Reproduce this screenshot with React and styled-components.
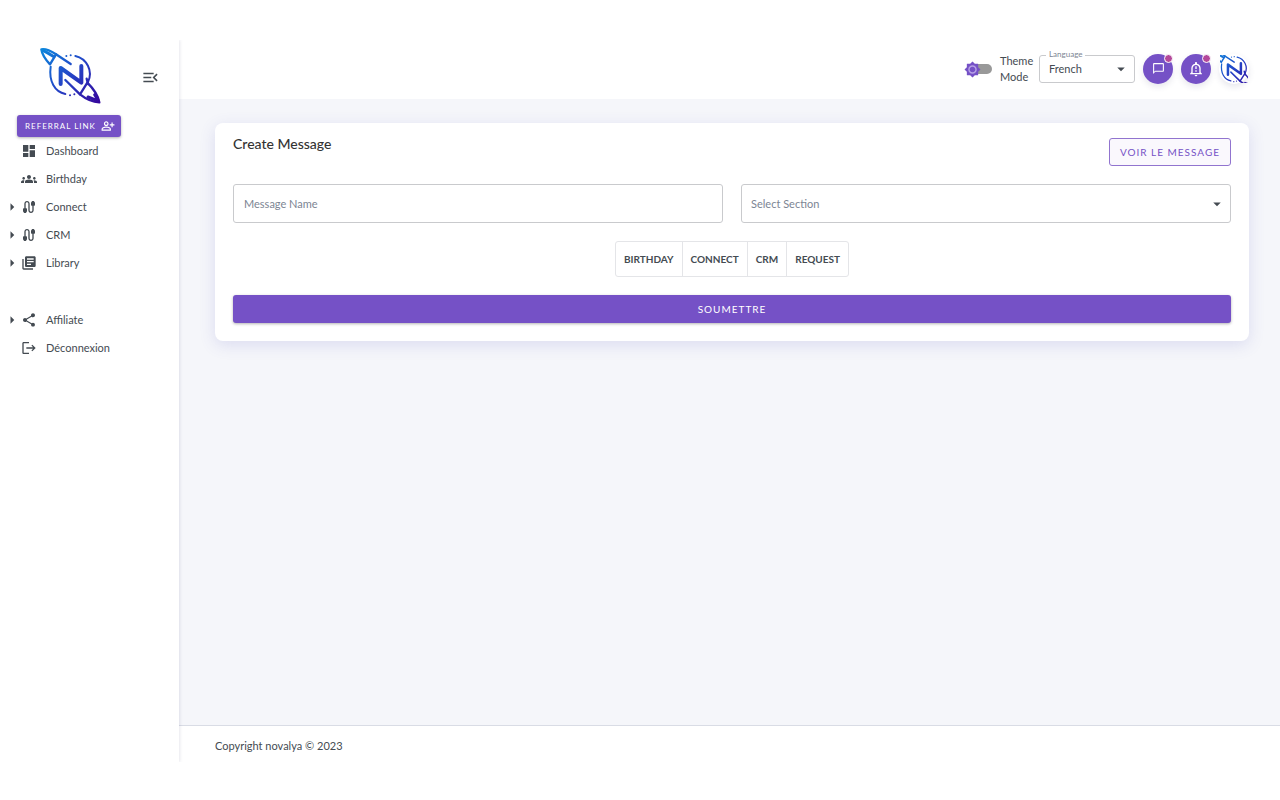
import React from "react";
import styled, { createGlobalStyle } from "styled-components";
import {
  MdArrowDropDown,
  MdArrowRight,
  MdBrightness7,
  MdCable,
  MdDashboard,
  MdGroups,
  MdLibraryBooks,
  MdLogout,
  MdMenuOpen,
  MdOutlineChatBubbleOutline,
  MdOutlineNotificationImportant,
  MdOutlinePersonAddAlt,
  MdShare,
} from "react-icons/md";

const purple = "#7551c6";

const GlobalStyle = createGlobalStyle`
  * {
    box-sizing: border-box;
  }
  body {
    margin: 0;
    background: #fff;
    color: #444b52;
    font-family: Lato, "Open Sans", sans-serif;
    font-size: 11px;
    line-height: 16px;
  }
  button,
  input,
  select {
    font: inherit;
    color: inherit;
  }
`;

const Page = styled.div`
  display: flex;
  min-height: 100vh;
  padding: 40px 0 38px;
`;

const Sidebar = styled.aside`
  flex: 0 0 179px;
  box-shadow: 1px 0 3px rgba(60, 60, 110, 0.12);
  clip-path: inset(0 -4px 0 0);
`;

const Brand = styled.div`
  display: flex;
  align-items: center;
  justify-content: space-between;
  height: 75px;
  padding: 0 19px 0 34px;
`;

const IconButton = styled.button`
  display: flex;
  padding: 0;
  border: 0;
  background: none;
  cursor: pointer;
`;

const Referral = styled.button`
  display: flex;
  align-items: center;
  justify-content: space-between;
  width: 104px;
  height: 22px;
  margin-left: 17px;
  padding: 0 6px 0 8px;
  border: 0;
  border-radius: 3px;
  background: ${purple};
  box-shadow: 0 1px 3px rgba(0, 0, 0, 0.3);
  color: #fff;
  font-size: 8px;
  letter-spacing: 1px;
  white-space: nowrap;
  cursor: pointer;
`;

const Menu = styled.ul`
  margin: 0 0 ${props => props.$gap || 0}px;
  padding: 0;
  list-style: none;
`;

const MenuLink = styled.a`
  display: flex;
  align-items: center;
  height: 28px;
  padding-left: 3px;
  color: inherit;
  text-decoration: none;
`;

const Arrow = styled.span`
  display: flex;
  width: 18px;
`;

const MenuIcon = styled.span`
  display: flex;
  width: 25px;
`;

const Main = styled.div`
  flex: 1;
  min-width: 0;
  display: flex;
  flex-direction: column;
`;

const Header = styled.header`
  display: flex;
  align-items: center;
  justify-content: flex-end;
  gap: 8px;
  height: 59px;
  padding: 0 31px 2px 16px;
`;

const ThemeSwitch = styled.label`
  display: flex;
  align-items: center;
  gap: 8px;
  width: 67px;
`;

const Track = styled.span`
  position: relative;
  flex: 0 0 28px;
  height: 18px;

  &::before {
    content: "";
    position: absolute;
    inset: 4px 0 4px 4px;
    border-radius: 5px;
    background: #999;
  }
  input {
    position: absolute;
    inset: 0;
    margin: 0;
    opacity: 0;
  }
  svg {
    position: absolute;
    top: 1px;
    left: 0;
    border-radius: 50%;
    background: radial-gradient(#b7a1e6 50%, transparent 51%);
    color: ${purple};
  }
`;

const Field = styled.div`
  position: relative;
  flex: ${props => (props.$width ? `0 0 ${props.$width}px` : "1")};
  min-width: 0;

  > svg {
    position: absolute;
    top: 50%;
    right: 5px;
    transform: translateY(-50%);
    pointer-events: none;
  }
`;

const FieldLabel = styled.label`
  position: absolute;
  top: -7px;
  left: 7px;
  padding: 0 3px;
  background: #fff;
  color: #7c8593;
  font-size: 8px;
  line-height: 12px;
`;

const Select = styled.select`
  appearance: none;
  display: block;
  width: 100%;
  height: ${props => (props.$tall ? 39 : 28)}px;
  padding: 0 9px;
  border: 1px solid #c9cacd;
  border-radius: 3px;
  background: #fff;
  color: ${props => (props.$tall ? "#7c8593" : "inherit")};
`;

const Input = styled.input`
  display: block;
  width: 100%;
  height: 39px;
  padding: 0 10px;
  border: 1px solid #c9cacd;
  border-radius: 3px;

  &::placeholder {
    color: #7c8593;
    opacity: 1;
  }
`;

const RoundButton = styled.button`
  position: relative;
  display: grid;
  place-items: center;
  width: 30px;
  height: 30px;
  padding: 0;
  border: 0;
  border-radius: 50%;
  background: ${props => (props.$plain ? "#fff" : purple)};
  box-shadow: 0 3px 6px rgba(60, 60, 110, 0.12);
  color: #fff;
  cursor: pointer;
`;

const Dot = styled.span`
  position: absolute;
  top: 0;
  right: 0;
  width: 9px;
  height: 9px;
  border: 1px solid #fff;
  border-radius: 50%;
  background: #b4489a;
`;

const Content = styled.main`
  flex: 1;
  padding: 24px 31px 24px 36px;
  background: #f5f6fa;
`;

const Card = styled.form`
  display: flex;
  flex-direction: column;
  gap: 18px;
  padding: 15px 18px 18px;
  border-radius: 8px;
  background: #fff;
  box-shadow: 0 4px 16px rgba(90, 90, 190, 0.16);
`;

const CardHead = styled.div`
  display: flex;
  justify-content: space-between;
`;

const Title = styled.h1`
  margin: 0;
  color: #333;
  font-size: 14px;
  font-weight: 500;
  line-height: 12px;
`;

const Outlined = styled.button`
  height: 28px;
  padding: 0 10px;
  border: 1px solid #9174cf;
  border-radius: 3px;
  background: #faf8fd;
  color: ${purple};
  font-size: 10px;
  letter-spacing: 1px;
  cursor: pointer;
`;

const Fields = styled.div`
  display: flex;
  gap: 18px;
`;

const Tags = styled.div`
  display: flex;
  align-self: center;
  border: 1px solid #e4e5e8;
  border-radius: 3px;
`;

const Tag = styled.button`
  height: 34px;
  padding: 0 8px;
  border: 0;
  background: none;
  font-size: 10px;
  font-weight: 700;
  cursor: pointer;

  & + & {
    border-left: 1px solid #e4e5e8;
  }
`;

const Submit = styled.button`
  height: 28px;
  border: 0;
  border-radius: 3px;
  background: ${purple};
  box-shadow: 0 1px 3px rgba(0, 0, 0, 0.3);
  color: #fff;
  font-size: 10px;
  letter-spacing: 1px;
  cursor: pointer;
`;

const Footer = styled.footer`
  padding: 12px 36px 8px;
  border-top: 1px solid #d9dce5;
`;

const Logo = ({ id, width, height, viewBox }) => (
  <svg width={width} height={height} viewBox={viewBox} fill="none" aria-hidden="true">
    <defs>
      <linearGradient id={id} x1="22" y1="20" x2="196" y2="180" gradientUnits="userSpaceOnUse">
        <stop stopColor="#0c86dc" />
        <stop offset="0.5" stopColor="#2443c6" />
        <stop offset="1" stopColor="#35069c" />
      </linearGradient>
    </defs>
    <g stroke={`url(#${id})`} strokeLinecap="round" strokeLinejoin="round">
      {/* orbit */}
      <path d="M50 72C44 116 62 148 94 154" strokeWidth="6" />
      <path d="M124 40C158 48 178 84 162 118" strokeWidth="6" />
      <path d="M97 40h.1M110 38h.1M108 158h.1M121 155h.1" strokeWidth="6" />
      {/* letter and the band behind it */}
      <path d="M80 124V76L142 120V70" strokeWidth="12" />
      <path d="M66 35L110 64M158 108L162 124M94 112L138 155" strokeWidth="7" />
      {/* nose and tail */}
      <path d="M22 20C34 17 49 24 66 35L48 65C35 51 24 35 22 20Z" strokeWidth="7" />
      <path d="M28 24C40 30 50 36 60 42" strokeWidth="9" />
      <path d="M160 120C179 139 193 162 196 179C178 178 157 170 138 155Z" strokeWidth="7" />
      <path d="M162 163L190 174M182 156L192 172" strokeWidth="9" />
    </g>
  </svg>
);

const mainLinks = [
  { label: "Dashboard", icon: MdDashboard },
  { label: "Birthday", icon: MdGroups },
  { label: "Connect", icon: MdCable, nested: true },
  { label: "CRM", icon: MdCable, nested: true },
  { label: "Library", icon: MdLibraryBooks, nested: true },
];

const accountLinks = [
  { label: "Affiliate", icon: MdShare, nested: true },
  { label: "Déconnexion", icon: MdLogout },
];

const Links = ({ items, gap }) => (
  <Menu $gap={gap}>
    {items.map(({ label, icon: Icon, nested }) => (
      <li key={label}>
        <MenuLink href="#">
          <Arrow>{nested && <MdArrowRight size={18} />}</Arrow>
          <MenuIcon><Icon size={16} /></MenuIcon>
          {label}
        </MenuLink>
      </li>
    ))}
  </Menu>
);

export default function App() {
  return (
    <Page>
      <GlobalStyle />
      <Sidebar>
        <Brand>
          <Logo id="brand" width={72} height={64} viewBox="0 10 216 192" />
          <IconButton type="button" aria-label="Toggle menu">
            <MdMenuOpen size={19} />
          </IconButton>
        </Brand>
        <Referral type="button">
          REFERRAL LINK <MdOutlinePersonAddAlt size={14} />
        </Referral>
        <nav>
          <Links items={mainLinks} gap={29} />
          <Links items={accountLinks} />
        </nav>
      </Sidebar>
      <Main>
        <Header>
          <ThemeSwitch>
            <Track>
              <input type="checkbox" role="switch" />
              <MdBrightness7 size={17} />
            </Track>
            Theme Mode
          </ThemeSwitch>
          <Field $width={96}>
            <Select id="language" defaultValue="French">
              <option>French</option>
              <option>English</option>
            </Select>
            <FieldLabel htmlFor="language">Language</FieldLabel>
            <MdArrowDropDown size={18} />
          </Field>
          <RoundButton type="button" aria-label="Messages">
            <MdOutlineChatBubbleOutline size={13} />
            <Dot />
          </RoundButton>
          <RoundButton type="button" aria-label="Notifications">
            <MdOutlineNotificationImportant size={16} />
            <Dot />
          </RoundButton>
          <RoundButton type="button" aria-label="Account" $plain>
            <Logo id="avatar" width={28} height={28} viewBox="42 30 134 134" />
          </RoundButton>
        </Header>
        <Content>
          <Card>
            <CardHead>
              <Title>Create Message</Title>
              <Outlined type="button">VOIR LE MESSAGE</Outlined>
            </CardHead>
            <Fields>
              <Field>
                <Input aria-label="Message Name" placeholder="Message Name" />
              </Field>
              <Field>
                <Select aria-label="Select Section" $tall>
                  <option>Select Section</option>
                </Select>
                <MdArrowDropDown size={18} />
              </Field>
            </Fields>
            <Tags>
              <Tag type="button">BIRTHDAY</Tag>
              <Tag type="button">CONNECT</Tag>
              <Tag type="button">CRM</Tag>
              <Tag type="button">REQUEST</Tag>
            </Tags>
            <Submit type="submit">SOUMETTRE</Submit>
          </Card>
        </Content>
        <Footer>Copyright novalya © 2023</Footer>
      </Main>
    </Page>
  );
}
